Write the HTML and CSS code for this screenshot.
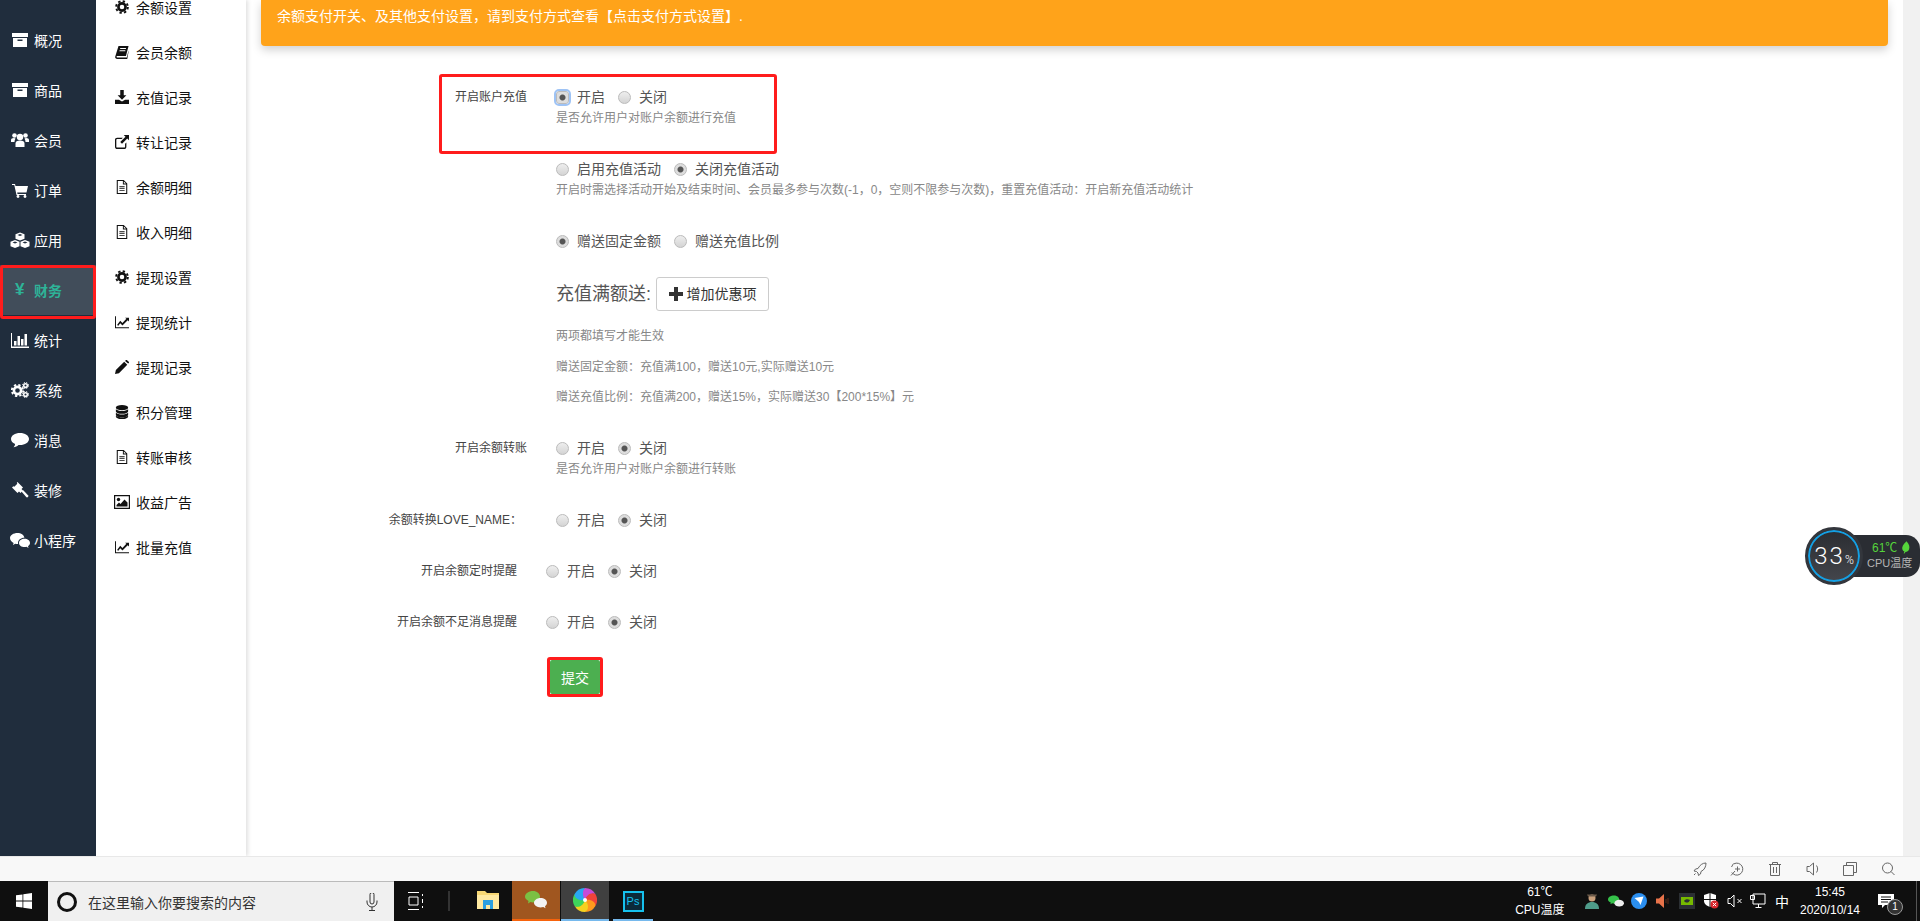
FILE: index.html
```html
<!DOCTYPE html>
<html lang="zh-CN">
<head>
    <meta charset="UTF-8">
    <title>财务 - 余额设置</title>
    <link rel="stylesheet" href="styles.css">
</head>
<body>
    <svg class="sprite" width="0" height="0">
        <symbol id="i-archive" viewBox="0 0 16 16"><path d="M0 1h16v4H0zM1 6h14v9H1zM5.500 7.500v1.500h5V7.500z" fill-rule="evenodd"/></symbol>
        <symbol id="i-users" viewBox="0 0 18 16"><circle cx="9" cy="5" r="3.200"/><circle cx="3.500" cy="3.500" r="2.300"/><circle cx="14.500" cy="3.500" r="2.300"/><path d="M4.500 15v-3.500c0-2 1.500-3 4.500-3s4.500 1 4.500 3V15zM0 10V8c0-1.300 1-2 3-2l1.500.5C3.800 7.800 3.500 9 3.500 10zM18 10V8c0-1.300-1-2-3-2l-1.500.5c.7 1.300 1 2.500 1 3.500z"/></symbol>
        <symbol id="i-cart" viewBox="0 0 16 16"><path d="M0 2h3l.5 2H16l-1.500 6.500H5.200l.3 1.500H14v1H4.500L2.300 3H0z"/><circle cx="6" cy="14.500" r="1.400"/><circle cx="13" cy="14.500" r="1.400"/></symbol>
        <symbol id="i-cubes" viewBox="0 0 20 16"><path d="M10 .5l4.500 1.800v4.400L10 8.500 5.500 6.700V2.300zM10 2L7.500 3 10 4l2.500-1zM5 8l4.500 1.800v4.400L5 16 .5 14.200V9.800zM5 9.500L2.500 10.500 5 11.500l2.500-1zM15 8l4.500 1.800v4.400L15 16l-4.500-1.800V9.800zM15 9.500l-2.500 1 2.500 1 2.500-1z" fill-rule="evenodd"/></symbol>
        <symbol id="i-bars" viewBox="0 0 18 16"><path d="M0 1h1v13.500h17V16H0zM3 9h2.500v4.500H3zM6.500 4H9v9.500H6.500zM10 7h2.500v6.500H10zM13.500 2H16v11.500h-2.500z"/></symbol>
        <symbol id="i-cogs" viewBox="0 0 18 16"><circle cx="6.500" cy="8.500" r="3.600" fill="none" stroke="currentColor" stroke-width="2.600"/><circle cx="6.500" cy="8.500" r="5.700" fill="none" stroke="currentColor" stroke-width="1.800" stroke-dasharray="2.300 2.200"/><circle cx="14.500" cy="3.500" r="1.800" fill="none" stroke="currentColor" stroke-width="1.500"/><circle cx="14.500" cy="3.500" r="3" fill="none" stroke="currentColor" stroke-width="1" stroke-dasharray="1.300 1.100"/><circle cx="14.500" cy="12.500" r="1.800" fill="none" stroke="currentColor" stroke-width="1.500"/><circle cx="14.500" cy="12.500" r="3" fill="none" stroke="currentColor" stroke-width="1" stroke-dasharray="1.300 1.100"/></symbol>
        <symbol id="i-comment" viewBox="0 0 18 16"><path d="M9 1c5 0 9 2.600 9 6s-4 6-9 6l-1.500-.1C6 14.200 4.500 15 2.500 15.300 3.500 14.200 4 13.200 4.100 12 1.600 11 0 9.200 0 7c0-3.400 4-6 9-6z"/></symbol>
        <symbol id="i-gavel" viewBox="0 0 16 16"><path d="M5.500 0l5.500 5.500-1.500 1.500L11 8.500l-2.500 2.500L7 9.500 5.500 11 0 5.500l1.300-1.300 1 .5 3-3-.5-1z"/><path d="M9.500 9.500l1.500-1.500 5 5.200c.5.700.5 1.300 0 1.800s-1.300.6-1.800.1z"/></symbol>
        <symbol id="i-wechat" viewBox="0 0 20 16"><path d="M7.500 1C11 1 14 3 14.400 5.700 10.800 5.600 8 8 8 10.800c0 .5 0 .9.200 1.300h-.7c-.8 0-1.500-.1-2.200-.3L3 13l.6-2C1.400 9.700 0 8 0 6c0-2.800 3.400-5 7.500-5z"/><path d="M14.500 6.700c3 0 5.500 1.900 5.500 4.200 0 1.300-.8 2.400-2 3.300l.5 1.700-2-1.100c-.6.200-1.300.3-2 .3-3 0-5.500-1.900-5.500-4.200s2.500-4.200 5.500-4.200z"/></symbol>
        <symbol id="i-cog" viewBox="0 0 16 16"><circle cx="8" cy="8" r="4.100" fill="none" stroke="currentColor" stroke-width="3"/><circle cx="8" cy="8" r="6.700" fill="none" stroke="currentColor" stroke-width="2.200" stroke-dasharray="2.700 2.560"/></symbol>
        <symbol id="i-book" viewBox="0 0 16 16"><path d="M4 1h11.500l-3 11.500H3c-.9 0-1.300.4-1.300.9s.4.900 1.300.9h10.500l2-8v1.500L14 16H2.500C1 16 0 15 .2 13.500z"/><path d="M6 3.500h6.500v1H5.800zM5.300 6h6.500v1H5z" fill="#fff"/></symbol>
        <symbol id="i-download" viewBox="0 0 16 16"><path d="M6 0h4v6h3l-5 5-5-5h3zM0 11h4.500L8 13l3.500-2H16v5H0z"/></symbol>
        <symbol id="i-external" viewBox="0 0 16 16"><path d="M2.500 3H9L7.500 4.500h-5c-.6 0-1 .4-1 1v7.800c0 .6.400 1 1 1h8c.6 0 1-.4 1-1V10L13 8.500v4.800c0 1.500-1 2.700-2.500 2.700h-8C1 16 0 14.800 0 13.300V5.500C0 4 1 3 2.500 3z"/><path d="M10 0h6v6l-2-2-6 6-2-2 6-6z"/></symbol>
        <symbol id="i-file" viewBox="0 0 16 16"><path d="M2 0h8l4 4v12H2zM3.200 1.200v13.600h9.600V5.200H9V1.200zM10.100 1.600v2.500h2.500zM5 7.200h6v1H5zM5 9.400h6v1H5zM5 11.600h6v1H5z" fill-rule="evenodd"/></symbol>
        <symbol id="i-chart" viewBox="0 0 16 16"><path d="M0 1.500h1.100v12.400H16V15H0z"/><path d="M2.500 11l3.500-4.500 2.500 2.500L13 4.200 11.500 3H16v4.500L14.500 6 8.500 12 6 9.500 3.500 12.500z"/></symbol>
        <symbol id="i-pencil" viewBox="0 0 16 16"><path d="M0 16l1-4.500L10.500 2l3.500 3.500L4.500 15zM11.500 1l1-1c.5-.3 1 0 1.300.2l1.900 1.900c.4.400.4 1 0 1.400l-.7.5z"/></symbol>
        <symbol id="i-database" viewBox="0 0 16 16"><ellipse cx="8" cy="3" rx="7" ry="3"/><path d="M1 4.800C2.500 6.200 5 6.800 8 6.800s5.500-.6 7-2V7c0 1.500-3 3-7 3S1 8.500 1 7zM1 8.800C2.500 10.200 5 10.800 8 10.800s5.500-.6 7-2V11c0 1.500-3 3-7 3S1 12.500 1 11zM1 12.300c1.500 1.300 4 2 7 2s5.500-.7 7-2V13c0 1.700-3 3-7 3s-7-1.300-7-3z"/></symbol>
        <symbol id="i-picture" viewBox="0 0 16 14"><path d="M0 0h16v14H0zM1.200 1.200v11.600h13.600V1.200z" fill-rule="evenodd"/><circle cx="4.500" cy="4.500" r="1.700"/><path d="M2.500 11.500V10l2.500-2.500L6.500 9l4-4.500 3 3v4z"/></symbol>
        <symbol id="i-plus" viewBox="0 0 14 14"><path d="M5 0h4v5h5v4H9v5H5V9H0V5h5z"/></symbol>
    </svg>

    <div class="app">
        <nav class="nav">
            <a class="nav-item"><svg class="icon"><use href="#i-archive"/></svg>概况</a>
            <a class="nav-item"><svg class="icon"><use href="#i-archive"/></svg>商品</a>
            <a class="nav-item"><svg class="icon"><use href="#i-users"/></svg>会员</a>
            <a class="nav-item"><svg class="icon"><use href="#i-cart"/></svg>订单</a>
            <a class="nav-item"><svg class="icon icon-wide"><use href="#i-cubes"/></svg>应用</a>
            <a class="nav-item active"><span class="yen">¥</span>财务</a>
            <a class="nav-item"><svg class="icon"><use href="#i-bars"/></svg>统计</a>
            <a class="nav-item"><svg class="icon"><use href="#i-cogs"/></svg>系统</a>
            <a class="nav-item"><svg class="icon"><use href="#i-comment"/></svg>消息</a>
            <a class="nav-item"><svg class="icon"><use href="#i-gavel"/></svg>装修</a>
            <a class="nav-item"><svg class="icon icon-wide"><use href="#i-wechat"/></svg>小程序</a>
        </nav>

        <aside class="subnav">
            <a class="sub-item"><svg class="icon"><use href="#i-cog"/></svg>余额设置</a>
            <a class="sub-item"><svg class="icon"><use href="#i-book"/></svg>会员余额</a>
            <a class="sub-item"><svg class="icon"><use href="#i-download"/></svg>充值记录</a>
            <a class="sub-item"><svg class="icon"><use href="#i-external"/></svg>转让记录</a>
            <a class="sub-item"><svg class="icon"><use href="#i-file"/></svg>余额明细</a>
            <a class="sub-item"><svg class="icon"><use href="#i-file"/></svg>收入明细</a>
            <a class="sub-item"><svg class="icon"><use href="#i-cog"/></svg>提现设置</a>
            <a class="sub-item"><svg class="icon"><use href="#i-chart"/></svg>提现统计</a>
            <a class="sub-item"><svg class="icon"><use href="#i-pencil"/></svg>提现记录</a>
            <a class="sub-item"><svg class="icon"><use href="#i-database"/></svg>积分管理</a>
            <a class="sub-item"><svg class="icon"><use href="#i-file"/></svg>转账审核</a>
            <a class="sub-item"><svg class="icon"><use href="#i-picture"/></svg>收益广告</a>
            <a class="sub-item"><svg class="icon"><use href="#i-chart"/></svg>批量充值</a>
        </aside>

        <main class="main">
            <div class="notice">余额支付开关、及其他支付设置，请到支付方式查看【点击支付方式设置】.</div>

            <form class="form">
                <div class="row">
                    <label class="row-label">开启账户充值</label>
                    <div class="row-body">
                        <div class="radios">
                            <label><input type="radio" name="recharge" class="focused" checked>开启</label>
                            <label><input type="radio" name="recharge">关闭</label>
                        </div>
                        <p class="hint">是否允许用户对账户余额进行充值</p>
                    </div>
                </div>

                <div class="row">
                    <label class="row-label"></label>
                    <div class="row-body">
                        <div class="radios">
                            <label><input type="radio" name="activity">启用充值活动</label>
                            <label><input type="radio" name="activity" checked>关闭充值活动</label>
                        </div>
                        <p class="hint">开启时需选择活动开始及结束时间、会员最多参与次数(-1，0，空则不限参与次数)，重置充值活动：开启新充值活动统计</p>
                    </div>
                </div>

                <div class="row">
                    <label class="row-label"></label>
                    <div class="row-body">
                        <div class="radios">
                            <label><input type="radio" name="gift" checked>赠送固定金额</label>
                            <label><input type="radio" name="gift">赠送充值比例</label>
                        </div>
                    </div>
                </div>

                <div class="row row-promo">
                    <label class="row-label"></label>
                    <div class="row-body">
                        <div class="promo">
                            <span class="promo-title">充值满额送:</span>
                            <button type="button" class="btn-add"><svg class="icon-plus"><use href="#i-plus"/></svg>增加优惠项</button>
                        </div>
                        <p class="hint hint-block">两项都填写才能生效</p>
                        <p class="hint hint-block">赠送固定金额：充值满100，赠送10元,实际赠送10元</p>
                        <p class="hint hint-block">赠送充值比例：充值满200，赠送15%，实际赠送30【200*15%】元</p>
                    </div>
                </div>

                <div class="row">
                    <label class="row-label">开启余额转账</label>
                    <div class="row-body">
                        <div class="radios">
                            <label><input type="radio" name="transfer">开启</label>
                            <label><input type="radio" name="transfer" checked>关闭</label>
                        </div>
                        <p class="hint">是否允许用户对账户余额进行转账</p>
                    </div>
                </div>

                <div class="row row-tight">
                    <label class="row-label pad-md">余额转换LOVE_NAME：</label>
                    <div class="row-body">
                        <div class="radios">
                            <label><input type="radio" name="convert">开启</label>
                            <label><input type="radio" name="convert" checked>关闭</label>
                        </div>
                    </div>
                </div>

                <div class="row row-narrow row-tight">
                    <label class="row-label">开启余额定时提醒</label>
                    <div class="row-body">
                        <div class="radios">
                            <label><input type="radio" name="timed">开启</label>
                            <label><input type="radio" name="timed" checked>关闭</label>
                        </div>
                    </div>
                </div>

                <div class="row row-narrow">
                    <label class="row-label">开启余额不足消息提醒</label>
                    <div class="row-body">
                        <div class="radios">
                            <label><input type="radio" name="low">开启</label>
                            <label><input type="radio" name="low" checked>关闭</label>
                        </div>
                    </div>
                </div>

                <button type="button" class="btn-submit">提交</button>
            </form>

            <!-- annotation boxes drawn on the screenshot -->
            <div class="mark mark-row"></div>
            <div class="mark mark-submit"></div>
        </main>

        <div class="scrollbar"></div>
        <div class="mark mark-nav"></div>

        <div class="gauge">
            <div class="gauge-pill">
                <span class="gauge-temp">61℃
                    <svg class="leaf" viewBox="0 0 10 14"><path d="M6 0c3 3 4 6 3 9-.6 2-2.400 3-4 3l-1.500 2L3 13.500 3.800 11.500C1.500 10.500.5 8 2 5c.8-1.700 2.500-3 4-5z"/></svg>
                </span>
                <span class="gauge-label">CPU温度</span>
            </div>
            <div class="gauge-dial">33<small>%</small></div>
        </div>
    </div>

    <div class="statusbar">
        <svg class="tool" viewBox="0 0 14 14"><path d="M13 1C9.500 1 6.800 3 5 6.500L2.500 7 1 9l2.500.5 1.500 1.500.5 2.500 2-1.500.5-2.500C11.500 8 13 4.500 13 1zM1 13l1.500-1.500M9.500 4.500h.01"/></svg>
        <svg class="tool" viewBox="0 0 14 14"><path d="M4 1.800A6 6 0 1 1 1.800 10.500M7.500 4.500v5M5 7h5M1 13.500L5 9M1.500 5L3.500 1.500"/></svg>
        <svg class="tool" viewBox="0 0 14 14"><path d="M1 2.500h12M4.500 2.500V.5h5v2M2.500 2.500v11h9v-11M5.500 5v6M8.500 5v6"/></svg>
        <svg class="tool" viewBox="0 0 14 14"><path d="M1 4.500v5h2.500L7.500 13V1L3.500 4.500zM10.500 3.500c1.500 2 1.500 5 0 7"/></svg>
        <svg class="tool" viewBox="0 0 14 14"><path d="M3.500 3.500v-3h10v10h-3M.5 3.500h10v10H.5z"/></svg>
        <svg class="tool" viewBox="0 0 14 14"><circle cx="6.500" cy="6" r="5"/><path d="M10 9.500l3.500 3.500"/></svg>
    </div>

    <footer class="taskbar">
        <div class="start">
            <svg viewBox="0 0 16 16"><path d="M0 2.300L6.500 1.400v6.200H0zM7.300 1.300L16 0v7.600H7.300zM0 8.400h6.500v6.200L0 13.700zM7.300 8.400H16V16l-8.700-1.300z"/></svg>
        </div>
        <div class="search">
            <span class="cortana"></span>
            <span class="search-text">在这里输入你要搜索的内容</span>
            <svg class="mic" viewBox="0 0 12 18"><path d="M4 1.500a2 2 0 0 1 4 0v7.500a2 2 0 0 1-4 0zM1 7.500v1.500a5 5 0 0 0 10 0V7.500M6 14v3M3 17.500h6"/></svg>
        </div>
        <div class="task-view">
            <svg viewBox="0 0 16 18"><path d="M0 .5h11M0 17.500h11M1 5h9v8H1zM14.500 2v2M14.500 7v4M14.500 14v2"/></svg>
        </div>
        <span class="task-sep"></span>
        <div class="tile tile-folder">
            <svg viewBox="0 0 22 20"><path d="M0 1h8l2 2h12v16H0z" fill="#f7d774"/><path d="M0 5h22v14H0z" fill="#ffe9a1"/><path d="M6 10h10v9h-3v-4H9v4H6z" fill="#2b9fe0"/></svg>
        </div>
        <div class="tile tile-wechat">
            <svg viewBox="0 0 22 20"><path d="M8 1c4 0 7 2.500 7 5.800 0 3.200-3 5.700-7 5.700-1 0-1.800-.1-2.600-.4L3 13.500l.5-2.500C1.400 10 0 8.500 0 6.800 0 3.500 3.600 1 8 1z" fill="#7bc043"/><path d="M15.500 8c3.500 0 6.500 2 6.500 4.800 0 1.400-.8 2.600-2 3.400l.5 2-2.200-1.200c-.9.300-1.800.4-2.800.4-3.500 0-6.500-2-6.500-4.600S12 8 15.500 8z" fill="#f3f3f3"/></svg>
        </div>
        <div class="tile tile-chrome">
            <svg viewBox="0 0 24 24">
                <g id="petal"><path d="M12 12C8 8 8 2 12 0A12 12 0 0 1 22.400 6C18 5 14 8 12 12z" fill="#c64bd8"/></g>
                <path d="M12 12C8 8 8 2 12 0A12 12 0 0 1 22.400 6C18 5 14 8 12 12z" fill="#f0433a" transform="rotate(60 12 12)"/>
                <path d="M12 12C8 8 8 2 12 0A12 12 0 0 1 22.400 6C18 5 14 8 12 12z" fill="#ff9a1e" transform="rotate(120 12 12)"/>
                <path d="M12 12C8 8 8 2 12 0A12 12 0 0 1 22.400 6C18 5 14 8 12 12z" fill="#f5d21f" transform="rotate(180 12 12)"/>
                <path d="M12 12C8 8 8 2 12 0A12 12 0 0 1 22.400 6C18 5 14 8 12 12z" fill="#3ed45b" transform="rotate(240 12 12)"/>
                <path d="M12 12C8 8 8 2 12 0A12 12 0 0 1 22.400 6C18 5 14 8 12 12z" fill="#29a8f2" transform="rotate(300 12 12)"/>
                <circle cx="12" cy="12" r="2" fill="#fff"/>
            </svg>
        </div>
        <div class="tile tile-ps">
            <span class="ps-badge">Ps</span>
        </div>

        <div class="tray">
            <div class="tray-temp"><span>61℃</span><span>CPU温度</span></div>
            <span class="tray-icon">
                <svg viewBox="0 0 16 16"><circle cx="8" cy="5" r="3.500" fill="#c9a07c"/><path d="M3 1.500h10l-1 2H4z" fill="#6b5a4a"/><path d="M1 16c0-5 3-7 7-7s7 2 7 7z" fill="#4f9c8a"/></svg>
            </span>
            <span class="tray-icon">
                <svg viewBox="0 0 20 16"><path d="M7.500 1C11 1 14 3 14 6s-3 5-6.500 5c-.8 0-1.500-.1-2.200-.3L3 12l.5-2C1.400 9 0 7.500 0 6c0-3 3.400-5 7.500-5z" fill="#35c24a"/><path d="M14 6.500c3 0 6 1.700 6 4.200s-3 4.200-6 4.200-6-1.700-6-4.200 3-4.200 6-4.200z" fill="#eee"/></svg>
            </span>
            <span class="tray-icon">
                <svg viewBox="0 0 16 16"><circle cx="8" cy="8" r="8" fill="#2b8ff0"/><path d="M3.500 5l9-1.500L9.500 12 8 9z" fill="#fff"/></svg>
            </span>
            <span class="tray-icon">
                <svg viewBox="0 0 16 16"><path d="M1 5.500h3L9 1v14L4 10.500H1z" fill="#e8734a"/><path d="M11 6v4M13 5v6" stroke="#5a2a1a" fill="none"/></svg>
            </span>
            <span class="tray-icon">
                <svg viewBox="0 0 16 16"><path d="M0 0h16v16H0z" fill="#2b2f33"/><path d="M2 4h12v8H2z" fill="#76b900"/><path d="M5 8c1-2 4-2.500 6-1-1 3-4 3.500-6 1z" fill="#2b2f33"/></svg>
            </span>
            <span class="tray-icon">
                <svg viewBox="0 0 16 16"><path d="M1 2l6-2 6 2v6c0 3-3 5-6 6-3-1-6-3-6-6z" fill="#fff"/><path d="M7 0v14M1 6.500h12" stroke="#111" fill="none"/><circle cx="11.500" cy="11.500" r="4" fill="#d9262c"/><path d="M9.800 9.800l3.400 3.400M13.200 9.800l-3.400 3.400" stroke="#fff" fill="none"/></svg>
            </span>
            <span class="tray-icon">
                <svg viewBox="0 0 16 14" class="line-icon"><path d="M1 4.500v5h2.500L7 13V1L3.500 4.500zM10.500 5l4 4M14.500 5l-4 4"/></svg>
            </span>
            <span class="tray-icon">
                <svg viewBox="0 0 16 16" class="line-icon"><path d="M3 1h12v10H3zM8.500 11v3M5.500 14.500h6M.5 2.500h4v4h-4z"/></svg>
            </span>
            <span class="tray-icon tray-ime">中</span>
            <div class="clock"><span>15:45</span><span>2020/10/14</span></div>
            <div class="notify">
                <svg viewBox="0 0 16 15"><path d="M0 0h16v11H7l-3 3v-3H0z" fill="#fff"/><path d="M3 3h10M3 5.500h10M3 8h7" stroke="#111" fill="none"/></svg>
                <span class="notify-badge">1</span>
            </div>
            <span class="show-desktop"></span>
        </div>
    </footer>
</body>
</html>
```

FILE: styles.css
```css
* {
    box-sizing: border-box;
}

html, body {
    height: 100%;
}

body {
    margin: 0;
    display: flex;
    flex-direction: column;
    overflow: hidden;
    font-family: "Liberation Sans", "Noto Sans CJK SC", sans-serif;
    font-size: 14px;
    color: #555;
    background-color: #fff;
}

.sprite {
    position: absolute;
}

.app {
    flex: 1;
    min-height: 0;
    display: flex;
    position: relative;
    overflow: hidden;
    border-bottom: 1px solid #e8e8e8;
}

.icon {
    fill: currentColor;
    flex: none;
}

/* main nav */
.nav {
    width: 96px;
    flex: none;
    padding-top: 15px;
    background-color: #202d3d;
    color: #fff;
}

.nav-item {
    height: 50px;
    display: flex;
    align-items: center;
    padding-left: 11px;
    font-size: 14px;
}

.nav-item .icon {
    width: 18px;
    height: 16px;
    margin-right: 5px;
}

.nav-item .icon-wide {
    width: 20px;
    margin-left: -1px;
    margin-right: 4px;
}

.nav-item.active {
    color: #2eb398;
    background-color: #414d5a;
    font-weight: bold;
}

.yen {
    width: 18px;
    margin-right: 5px;
    padding-left: 4px;
    font-size: 17px;
}

/* sub nav */
.subnav {
    width: 150px;
    flex: none;
    background-color: #fff;
    color: #111;
    box-shadow: 2px 0 4px rgba(0,0,0,0.12);
    z-index: 1;
}

.sub-item {
    height: 45px;
    display: flex;
    align-items: center;
    padding-left: 18px;
    font-size: 14px;
}

.sub-item:first-child {
    margin-top: -16px;
}

.sub-item .icon {
    width: 16px;
    height: 14px;
    margin-right: 6px;
}

/* content */
.main {
    flex: 1;
    min-width: 0;
    padding: 0 15px;
}

.scrollbar {
    width: 17px;
    flex: none;
    background-color: #f1f1f1;
}

.notice {
    height: 46px;
    padding: 7px 16px 0;
    line-height: 18px;
    color: #fff;
    background-color: #ffa31a;
    border-radius: 0 0 4px 4px;
    box-shadow: 0 4px 10px rgba(0,0,0,0.18);
}

.form {
    padding-top: 41px;
}

.row {
    display: flex;
    margin-bottom: 32px;
    line-height: 20px;
}

.row-tight {
    margin-bottom: 31px;
}

.row-label {
    width: 295px;
    flex: none;
    padding-right: 29px;
    text-align: right;
    font-size: 12px;
    color: #444;
    white-space: nowrap;
}

.pad-md {
    padding-right: 34px;
}

.row-narrow .row-label {
    width: 285px;
}

.radios {
    display: flex;
    gap: 13px;
    height: 20px;
    color: #555;
}

.radios label {
    display: flex;
    align-items: center;
}

.radios input {
    appearance: none;
    width: 13px;
    height: 13px;
    margin: 0 8px 0 0;
    border-radius: 50%;
    border: 1px solid #bbb;
    background: linear-gradient(#eee, #d4d4d4);
    flex: none;
}

.radios input:checked {
    background: radial-gradient(circle, #555 0 2.500px, #ddd 3.500px);
}

.radios input.focused {
    outline: 2px solid #9ec3f5;
    outline-offset: 0;
    border-radius: 3px;
}

.hint {
    margin: 2px 0 0;
    font-size: 12px;
    line-height: 18px;
    color: #888;
    white-space: nowrap;
}

.row-promo {
    margin-top: -6px;
}

.promo {
    display: flex;
    align-items: center;
    height: 34px;
    margin-bottom: 16px;
}

.promo-title {
    width: 100px;
    font-size: 18px;
    color: #555;
    white-space: nowrap;
}

.btn-add {
    width: 113px;
    height: 34px;
    display: flex;
    align-items: center;
    justify-content: center;
    gap: 4px;
    padding: 0;
    border: 1px solid #ccc;
    border-radius: 3px;
    background-color: #fff;
    font: inherit;
    color: #333;
}

.icon-plus {
    width: 14px;
    height: 14px;
    fill: #333;
}

.hint-block {
    margin: 0 0 12.500px;
}

.hint-block:last-child {
    margin-bottom: 0;
}

.btn-submit {
    display: block;
    width: 50px;
    height: 34px;
    margin: -4px 0 0 289px;
    padding: 0;
    border: none;
    border-radius: 2px;
    background-color: #4caf50;
    color: #fff;
    font: inherit;
}

/* red annotation boxes */
.mark {
    position: absolute;
    border: 3px solid #ff1c1c;
    border-radius: 3px;
    z-index: 2;
}

.mark-nav {
    left: 0;
    top: 265px;
    width: 96px;
    height: 54px;
}

.mark-row {
    left: 439px;
    top: 74px;
    width: 338px;
    height: 80px;
}

.mark-submit {
    left: 547px;
    top: 657px;
    width: 56px;
    height: 40px;
}

/* cpu widget */
.gauge {
    position: absolute;
    left: 1805px;
    top: 527px;
    width: 115px;
    height: 58px;
    z-index: 3;
}

.gauge-pill {
    position: absolute;
    right: 0;
    top: 8px;
    width: 90px;
    height: 42px;
    padding: 6px 0 0 37px;
    border-radius: 0 14px 14px 0;
    background-color: #2a2d33;
    display: flex;
    flex-direction: column;
    font-size: 11px;
    line-height: 15px;
}

.gauge-temp {
    padding-left: 5px;
    color: #55d43b;
    font-size: 12px;
    white-space: nowrap;
}

.leaf {
    width: 9px;
    height: 13px;
    fill: #55d43b;
    vertical-align: -2px;
}

.gauge-label {
    color: #b5b5b5;
    white-space: nowrap;
}

.gauge-dial {
    position: absolute;
    left: 0;
    top: 0;
    width: 58px;
    height: 58px;
    border-radius: 50%;
    border: 3px solid #33363c;
    background: linear-gradient(#2a2c31, #44464c);
    box-shadow: inset 0 0 0 2px #14a0e4;
    color: #fff;
    text-align: center;
    font-family: Roboto, sans-serif;
    font-weight: 300;
    font-size: 24px;
    line-height: 52px;
    letter-spacing: 2px;
}

.gauge-dial small {
    font-size: 12px;
    letter-spacing: 0;
}

/* browser status strip */
.statusbar {
    height: 24px;
    flex: none;
    display: flex;
    align-items: center;
    justify-content: flex-end;
    gap: 23.700px;
    padding-right: 25px;
    background-color: #f8f8f8;
}

.tool {
    width: 14px;
    height: 14px;
    fill: none;
    stroke: #666;
}

/* windows taskbar */
.taskbar {
    height: 40px;
    flex: none;
    display: flex;
    align-items: stretch;
    background-color: #0f0f0f;
    color: #fff;
}

.start {
    width: 48px;
    display: flex;
    align-items: center;
    justify-content: center;
}

.start svg {
    width: 16px;
    height: 16px;
    fill: #fff;
}

.search {
    width: 346px;
    display: flex;
    align-items: center;
    padding: 0 16px 0 9px;
    background-color: #f0f0f0;
    border-top: 1px solid #bbb;
    color: #333;
}

.cortana {
    width: 20px;
    height: 20px;
    margin-right: 11px;
    border-radius: 50%;
    border: 3px solid #111;
}

.search-text {
    flex: 1;
    font-size: 14px;
}

.mic {
    width: 12px;
    height: 18px;
    fill: none;
    stroke: #333;
}

.task-view {
    width: 44px;
    display: flex;
    align-items: center;
    justify-content: center;
}

.task-view svg {
    width: 16px;
    height: 18px;
    fill: none;
    stroke: #fff;
}

.task-sep {
    width: 2px;
    height: 20px;
    margin: 10px 0 0 10px;
    background-color: #333;
}

.tile {
    width: 48px;
    display: flex;
    align-items: center;
    justify-content: center;
    border-bottom: 2px solid transparent;
}

.tile svg {
    width: 22px;
    height: 22px;
}

.tile-folder {
    margin-left: 14px;
}

.tile-wechat {
    background-color: #a0561f;
    border-bottom-color: #f7630c;
}

.tile-chrome {
    width: 48px;
    margin-left: 1px;
    background-color: #404040;
    border-bottom-color: #76b9ed;
}

.tile-chrome svg {
    width: 24px;
    height: 24px;
}

.tile-ps {
    border-bottom: none;
    background: linear-gradient(#76b9ed, #76b9ed) center bottom / 40px 2px no-repeat;
}

.ps-badge {
    width: 21px;
    height: 21px;
    border: 2px solid #16c1ee;
    background-color: #0b2a3a;
    color: #16c1ee;
    font-size: 11px;
    line-height: 17px;
    text-align: center;
}

.tray {
    margin-left: auto;
    display: flex;
    align-items: center;
}

.tray-temp,
.clock {
    display: flex;
    flex-direction: column;
    align-items: center;
    font-size: 12px;
    line-height: 18px;
}

.tray-temp {
    width: 80px;
}

.tray-icon {
    width: 23.800px;
    display: flex;
    justify-content: center;
}

.tray-icon svg {
    width: 16px;
    height: 16px;
}

.line-icon {
    fill: none;
    stroke: #fff;
}

.tray-ime {
    font-size: 14px;
}

.clock {
    width: 72px;
}

.notify {
    width: 40px;
    position: relative;
    display: flex;
    justify-content: center;
}

.notify svg {
    width: 16px;
    height: 15px;
}

.notify-badge {
    position: absolute;
    left: 21px;
    top: 5px;
    width: 16px;
    height: 16px;
    border-radius: 50%;
    border: 1px solid #999;
    background-color: #333;
    font-size: 10px;
    line-height: 14px;
    text-align: center;
}

.show-desktop {
    width: 1px;
    height: 40px;
    margin-left: 10px;
    margin-right: 3px;
    background-color: #555;
}
```
